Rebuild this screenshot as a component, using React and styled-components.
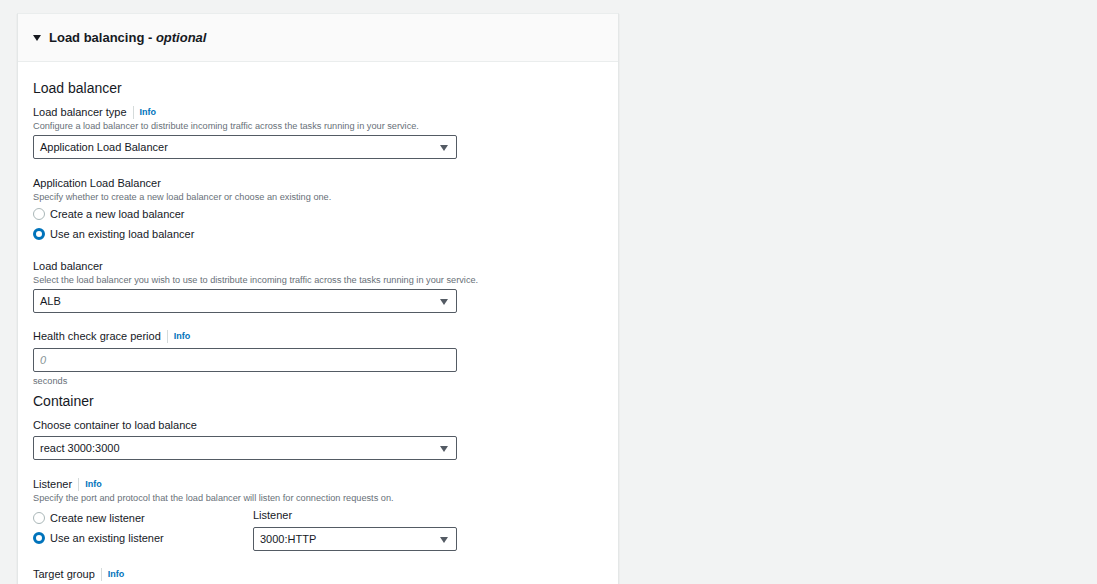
import React from "react";
import styled, { createGlobalStyle } from "styled-components";

const Global = createGlobalStyle`
  html, body {
    margin: 0;
    padding: 0;
    background: #f2f3f3;
    font-family: "Liberation Sans", Arial, sans-serif;
    color: #16191f;
  }
`;

const Page = styled.div`
  padding: 13px 17px;
`;

const Card = styled.div`
  width: 602px;
  box-sizing: border-box;
  background: #ffffff;
  border: 1px solid #e4e7e7;
  border-top-color: #eaeded;
  box-shadow: 0 1px 1px rgba(0, 28, 36, 0.12);
`;

const CardHeader = styled.div`
  height: 47px;
  display: flex;
  align-items: center;
  gap: 8px;
  padding: 0 15px;
  background: #fafafa;
  border-bottom: 1px solid #eaeded;
  font-size: 13px;
  font-weight: 700;
  color: #16191f;
`;

const Caret = styled.span`
  width: 0;
  height: 0;
  border-left: 4px solid transparent;
  border-right: 4px solid transparent;
  border-top: 6px solid ${({ color }) => color || "#16191f"};
  margin-top: 1px;
`;

const Optional = styled.i`
  font-weight: 700;
`;

const CardBody = styled.div`
  padding: 17px 15px 40px;
  display: flex;
  flex-direction: column;
`;

const Heading = styled.div`
  font-size: 14px;
  line-height: 18px;
  margin-top: ${({ top }) => top || 0}px;
`;

const Field = styled.div`
  display: flex;
  flex-direction: column;
  margin-top: ${({ top }) => top ?? 16}px;
`;

const LabelRow = styled.div`
  display: flex;
  align-items: center;
  font-size: 11px;
  line-height: 16px;
  color: #16191f;
`;

const Sep = styled.span`
  width: 1px;
  height: 13px;
  background: #d5dbdb;
  margin: 0 6px;
`;

const Info = styled.span`
  font-size: 9px;
  font-weight: 700;
  color: #0073bb;
`;

const Desc = styled.div`
  font-size: 9.2px;
  line-height: 12px;
  color: #687078;
  white-space: nowrap;
  margin-top: ${({ top }) => top || 0}px;
`;

const Box = styled.div`
  width: ${({ width }) => width || 424}px;
  height: 24px;
  box-sizing: border-box;
  border: 1px solid #545b64;
  border-radius: 2px;
  display: flex;
  align-items: center;
  justify-content: space-between;
  padding: 0 8px 0 6px;
  margin-top: ${({ top }) => top ?? 3}px;
  font-size: 11px;
  color: ${({ placeholder }) => (placeholder ? "#879596" : "#16191f")};
  font-style: ${({ placeholder }) => (placeholder ? "italic" : "normal")};
  background: #fff;
`;

const Radios = styled.div`
  display: flex;
  flex-direction: column;
  margin-top: ${({ top }) => top ?? 1}px;
`;

const RadioRow = styled.div`
  height: 20px;
  display: flex;
  align-items: center;
  gap: 5px;
  font-size: 11px;
`;

const Dot = styled.span`
  width: 12px;
  height: 12px;
  box-sizing: border-box;
  border-radius: 50%;
  border: ${({ on }) => (on ? "3.5px solid #0073bb" : "1px solid #aab7b8")};
  background: #fff;
`;

const Split = styled.div`
  display: grid;
  grid-template-columns: 220px 204px;
  align-items: start;
`;

const Label = ({ children, info }) => (
  <LabelRow>
    {children}
    {info && (
      <>
        <Sep />
        <Info>Info</Info>
      </>
    )}
  </LabelRow>
);

const Select = ({ children, top, width }) => (
  <Box top={top} width={width}>
    <span>{children}</span>
    <Caret color="#545b64" />
  </Box>
);

const Radio = ({ on, children }) => (
  <RadioRow>
    <Dot on={on ? 1 : 0} />
    {children}
  </RadioRow>
);

export default function App() {
  return (
    <Page>
      <Global />
      <Card>
        <CardHeader>
          <Caret />
          <span>
            Load balancing - <Optional>optional</Optional>
          </span>
        </CardHeader>
        <CardBody>
          <Heading>Load balancer</Heading>
          <Field top={7}>
            <Label info>Load balancer type</Label>
            <Desc>Configure a load balancer to distribute incoming traffic across the tasks running in your service.</Desc>
            <Select>Application Load Balancer</Select>
          </Field>

          <Field>
            <Label>Application Load Balancer</Label>
            <Desc>Specify whether to create a new load balancer or choose an existing one.</Desc>
            <Radios>
              <Radio>Create a new load balancer</Radio>
              <Radio on>Use an existing load balancer</Radio>
            </Radios>
          </Field>

          <Field top={14}>
            <Label>Load balancer</Label>
            <Desc>Select the load balancer you wish to use to distribute incoming traffic across the tasks running in your service.</Desc>
            <Select>ALB</Select>
          </Field>

          <Field top={15}>
            <Label info>Health check grace period</Label>
            <Box top={4} placeholder={1}>0</Box>
            <Desc top={3}>seconds</Desc>
          </Field>

          <Heading top={5}>Container</Heading>
          <Field top={7}>
            <Label>Choose container to load balance</Label>
            <Select>react 3000:3000</Select>
          </Field>

          <Field>
            <Label info>Listener</Label>
            <Desc>Specify the port and protocol that the load balancer will listen for connection requests on.</Desc>
            <Split>
              <Radios top={4}>
                <Radio>Create new listener</Radio>
                <Radio on>Use an existing listener</Radio>
              </Radios>
              <Field top={3}>
                <Label>Listener</Label>
                <Select top={4} width={204}>3000:HTTP</Select>
              </Field>
            </Split>
          </Field>

          <Field top={15}>
            <Label info>Target group</Label>
          </Field>
        </CardBody>
      </Card>
    </Page>
  );
}
